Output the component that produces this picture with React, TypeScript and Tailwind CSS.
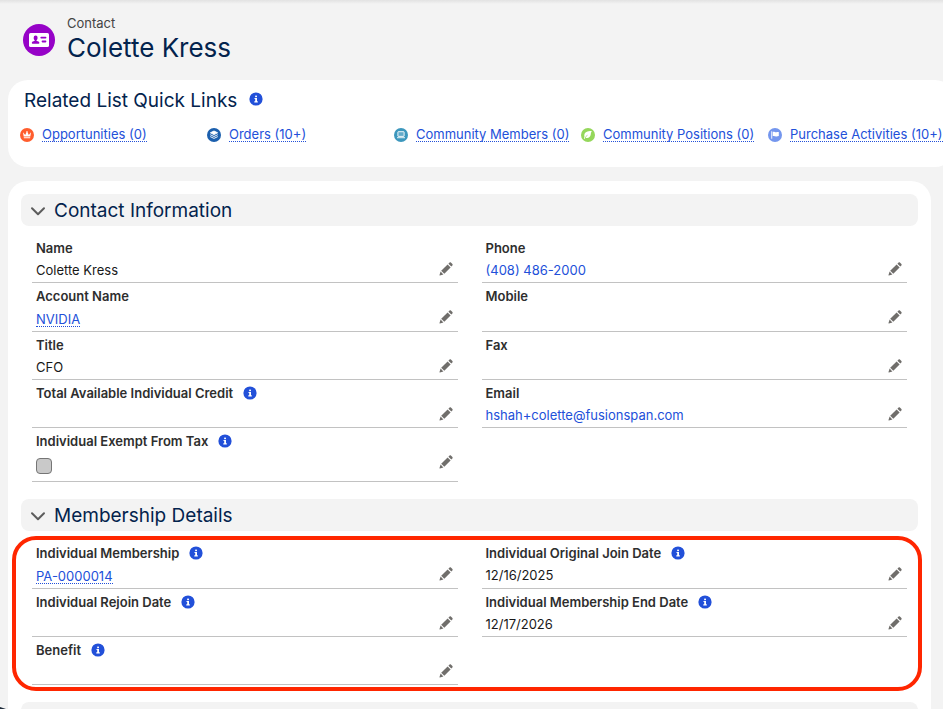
import React from 'react';

type FieldData = {
  label: string;
  value?: string;
  kind?: 'text' | 'record' | 'plain' | 'checkbox';
  href?: string;
  help?: boolean;
};

const contactFields: (FieldData | null)[] = [
  { label: 'Name', value: 'Colette Kress' },
  { label: 'Phone', value: '(408) 486-2000', kind: 'plain', href: 'tel:4084862000' },
  { label: 'Account Name', value: 'NVIDIA', kind: 'record', href: '#account' },
  { label: 'Mobile' },
  { label: 'Title', value: 'CFO' },
  { label: 'Fax' },
  { label: 'Total Available Individual Credit', help: true },
  { label: 'Email', value: 'hshah+colette@fusionspan.com', kind: 'plain', href: 'mailto:hshah+colette@fusionspan.com' },
  { label: 'Individual Exempt From Tax', kind: 'checkbox', help: true },
  null,
];

const membershipFields: (FieldData | null)[] = [
  { label: 'Individual Membership', value: 'PA-0000014', kind: 'record', href: '#membership', help: true },
  { label: 'Individual Original Join Date', value: '12/16/2025', help: true },
  { label: 'Individual Rejoin Date', help: true },
  { label: 'Individual Membership End Date', value: '12/17/2026', help: true },
  { label: 'Benefit', help: true },
  null,
];

const InfoIcon = () => (
  <svg viewBox="0 0 14 14" className="size-3.5 shrink-0" aria-hidden="true">
    <circle cx="7" cy="7" r="6.6" fill="#2250d9" />
    <rect x="6.1" y="3.6" width="1.9" height="1.6" rx="0.6" fill="#fff" />
    <path d="M5.5 6h2.5v3.3h.8v1.1H5.3V9.3h.9V7.1h-.7z" fill="#fff" />
  </svg>
);

const PencilIcon = () => (
  <svg viewBox="0 0 14 14" className="size-3.5" fill="#706e6b" aria-hidden="true">
    <path d="M2.2 8.7 8.6 2.4l3 3L5.3 11.8z" />
    <path d="M9.4 1.7 10.6.6c.4-.4.9-.4 1.3 0l1.5 1.5c.4.4.4.9 0 1.3l-1.1 1.2z" />
    <path d="M1.6 9.6 4.4 12.4.9 13.5c-.3.1-.5-.1-.4-.4z" />
  </svg>
);

const ContactIcon = () => (
  <svg viewBox="0 0 32 32" className="size-8 shrink-0" aria-hidden="true">
    <circle cx="16" cy="16" r="16" fill="#9602c7" />
    <rect x="6" y="9" width="20" height="14" rx="1.6" fill="#fff" />
    <g fill="#9602c7">
      <ellipse cx="12.6" cy="13.9" rx="2" ry="2.4" />
      <path d="M11.7 15h1.8v1.7c1.7.5 2.9 1 2.9 2.1 0 .6-.3.9-.8.9h-6c-.5 0-.8-.3-.8-.9 0-1.1 1.2-1.6 2.9-2.1z" />
      <rect x="17.4" y="12.8" width="6" height="1.8" rx="0.8" />
      <rect x="18.6" y="16.6" width="4.8" height="1.8" rx="0.8" />
    </g>
  </svg>
);

const quickLinks = [
  {
    label: 'Opportunities (0)',
    color: '#ff5d2d',
    glyph: (
      <path d="M3.2 4.6 5.2 7 6.4 4.2a.7.7 0 1 1 1.2 0L8.8 7l2-2.4.2 0-.7 4H3.7L3 4.6zM3.8 9.3h6.4v.9H3.8z" fill="#fff" />
    ),
  },
  {
    label: 'Orders (10+)',
    color: '#1b5fad',
    glyph: (
      <g fill="none" stroke="#fff" strokeWidth="0.9" strokeLinejoin="round">
        <path d="M7 3 10.6 4.8 7 6.6 3.4 4.8z" fill="#fff" />
        <path d="M3.2 6.7 7 8.5l3.8-1.8M3.2 8.6 7 10.4l3.8-1.8" />
      </g>
    ),
  },
  {
    label: 'Community Members (0)',
    color: '#3c97bd',
    glyph: (
      <g>
        <rect x="3.9" y="3.7" width="6.2" height="4.7" rx="0.4" fill="#fff" fillOpacity="0.2" stroke="#fff" strokeWidth="0.9" />
        <path d="M3 9.3h8v.9H3z" fill="#fff" />
      </g>
    ),
  },
  {
    label: 'Community Positions (0)',
    color: '#95d75b',
    glyph: (
      <path d="M10.8 3.1C7 3 3.3 4 3.3 7.4c0 .8.2 1.2.2 1.2-.3.9-.4 1.6-.3 2.3l.8-.1c.1-2 1.2-3.6 3.2-4.4-1.4 1.2-2.2 2.3-2.3 3.5 2.8.5 4.4-.8 4.8-3.1.2-1.4.3-2.5 1.1-3.7z" fill="#fff" />
    ),
  },
  {
    label: 'Purchase Activities (10+)',
    color: '#7496ee',
    glyph: (
      <path d="M3.3 3.2h.9v7.6h-.9zM4.8 3.9c1.2-.7 2.1.4 3.3.4.9 0 1.8-.3 2.7-.2v4c-1 .2-1.8.4-2.7.3-1.2-.1-2.1-.9-3.3-.3z" fill="#fff" />
    ),
  },
];

const RecordLink = ({ href, children }: { href: string; children: React.ReactNode }) => (
  <a href={href} className="inline-block whitespace-nowrap border-b border-dotted border-[#2250d9] leading-[14px] text-[#2250d9]">
    {children}
  </a>
);

const Field = ({ field }: { field: FieldData }) => {
  const id = field.label.toLowerCase().replace(/ /g, '-');
  return (
    <div className="border-b border-[#c2c2c2] px-1 pt-1 pb-0.5">
      <div className="flex h-[18px] items-center gap-2.5 font-semibold text-[#2e2e2e]">
        {field.kind === 'checkbox' ? (
          <label htmlFor={id} className="pt-0.5">{field.label}</label>
        ) : (
          <span className="pt-0.5">{field.label}</span>
        )}
        {field.help && <InfoIcon />}
      </div>
      <div className="flex items-start justify-between pt-1">
        {field.kind === 'checkbox' ? (
          <div className="h-[25px] pt-1">
            <input
              id={id}
              type="checkbox"
              disabled
              className="block size-4 appearance-none rounded-[4px] border border-[#757575] bg-[#c9c9c9]"
            />
          </div>
        ) : field.kind === 'record' ? (
          <div className="flex h-5 items-center">
            <RecordLink href={field.href!}>{field.value}</RecordLink>
          </div>
        ) : field.kind === 'plain' ? (
          <a href={field.href} className="h-[19px] leading-[19px] text-[#2250d9]">{field.value}</a>
        ) : (
          <span className="h-[19px] leading-[19px] text-[#181818]">{field.value}</span>
        )}
        <button type="button" aria-label={`Edit ${field.label}`} className="pt-px pr-px">
          <PencilIcon />
        </button>
      </div>
    </div>
  );
};

const SectionHeader = ({ title }: { title: string }) => (
  <h2>
    <button type="button" className="flex h-8 w-full items-center gap-2 rounded-lg bg-[#f3f3f3] px-[9px] text-left">
      <svg viewBox="0 0 16 16" className="mt-0.5 size-4" fill="none" stroke="#5c5c5c" strokeWidth="2" strokeLinecap="round" strokeLinejoin="round" aria-hidden="true">
        <path d="M2 5.3 8 11.2l6-5.9" />
      </svg>
      <span className="pt-0.5 text-[19px] text-[#03234d]">{title}</span>
    </button>
  </h2>
);

const FieldGrid = ({ fields }: { fields: (FieldData | null)[] }) => (
  <div className="grid grid-cols-2 gap-x-6 px-[11px]">
    {fields.map((field, i) => (field ? <Field key={field.label} field={field} /> : <div key={i} />))}
  </div>
);

const App: React.FC = () => {
  return (
    <div className="relative flex h-screen flex-col overflow-hidden bg-[#f3f3f3] pr-3 pl-2 font-['Inter','Liberation_Sans',sans-serif] text-[13px]">
      <div className="absolute inset-x-0 top-0 h-1 bg-gradient-to-b from-[#e2e2e2] to-[#f3f3f3]" />

      {/* Record header */}
      <header className="flex h-20 shrink-0 items-center gap-3 pl-[15px]">
        <ContactIcon />
        <div>
          <p className="leading-4 text-[#444444]">Contact</p>
          <h1 className="text-[26px] leading-[34px] text-[#03234d]">Colette Kress</h1>
        </div>
      </header>

      {/* Quick links run past the right edge of the window */}
      <section className="-mr-6 h-[87px] shrink-0 rounded-[20px] bg-white pt-[5px] pl-3">
        <div className="flex items-center gap-3 pl-1">
          <h2 className="pt-1 text-[19px] leading-6 text-[#03234d]">Related List Quick Links</h2>
          <InfoIcon />
        </div>
        <ul className="mt-3.5 grid grid-cols-5">
          {quickLinks.map(link => (
            <li key={link.label} className="flex items-center gap-2">
              <svg viewBox="0 0 14 14" className="size-3.5 shrink-0" aria-hidden="true">
                <circle cx="7" cy="7" r="7" fill={link.color} />
                {link.glyph}
              </svg>
              <RecordLink href="#related">{link.label}</RecordLink>
            </li>
          ))}
        </ul>
      </section>

      {/* Record details */}
      <main className="mt-3.5 shrink-0 rounded-t-[20px] bg-white p-[13px]">
        <SectionHeader title="Contact Information" />
        <div className="mt-[9px] mb-[17px]">
          <FieldGrid fields={contactFields} />
        </div>

        <SectionHeader title="Membership Details" />
        <div className="relative mt-[9px] mb-[17px]">
          <FieldGrid fields={membershipFields} />
          <div className="pointer-events-none absolute -top-1 -right-1 -bottom-1.5 -left-[9px] rounded-[24px] border-4 border-[#ff2600]" />
        </div>

        <div className="h-8 rounded-lg bg-[#f3f3f3]" />
      </main>

      <svg viewBox="0 0 6 2" className="absolute bottom-0 left-0 h-0.5 w-1.5" aria-hidden="true">
        <path d="M0 0 6 2H0z" fill="#1d2a3a" />
      </svg>
    </div>
  );
};

export default App;
